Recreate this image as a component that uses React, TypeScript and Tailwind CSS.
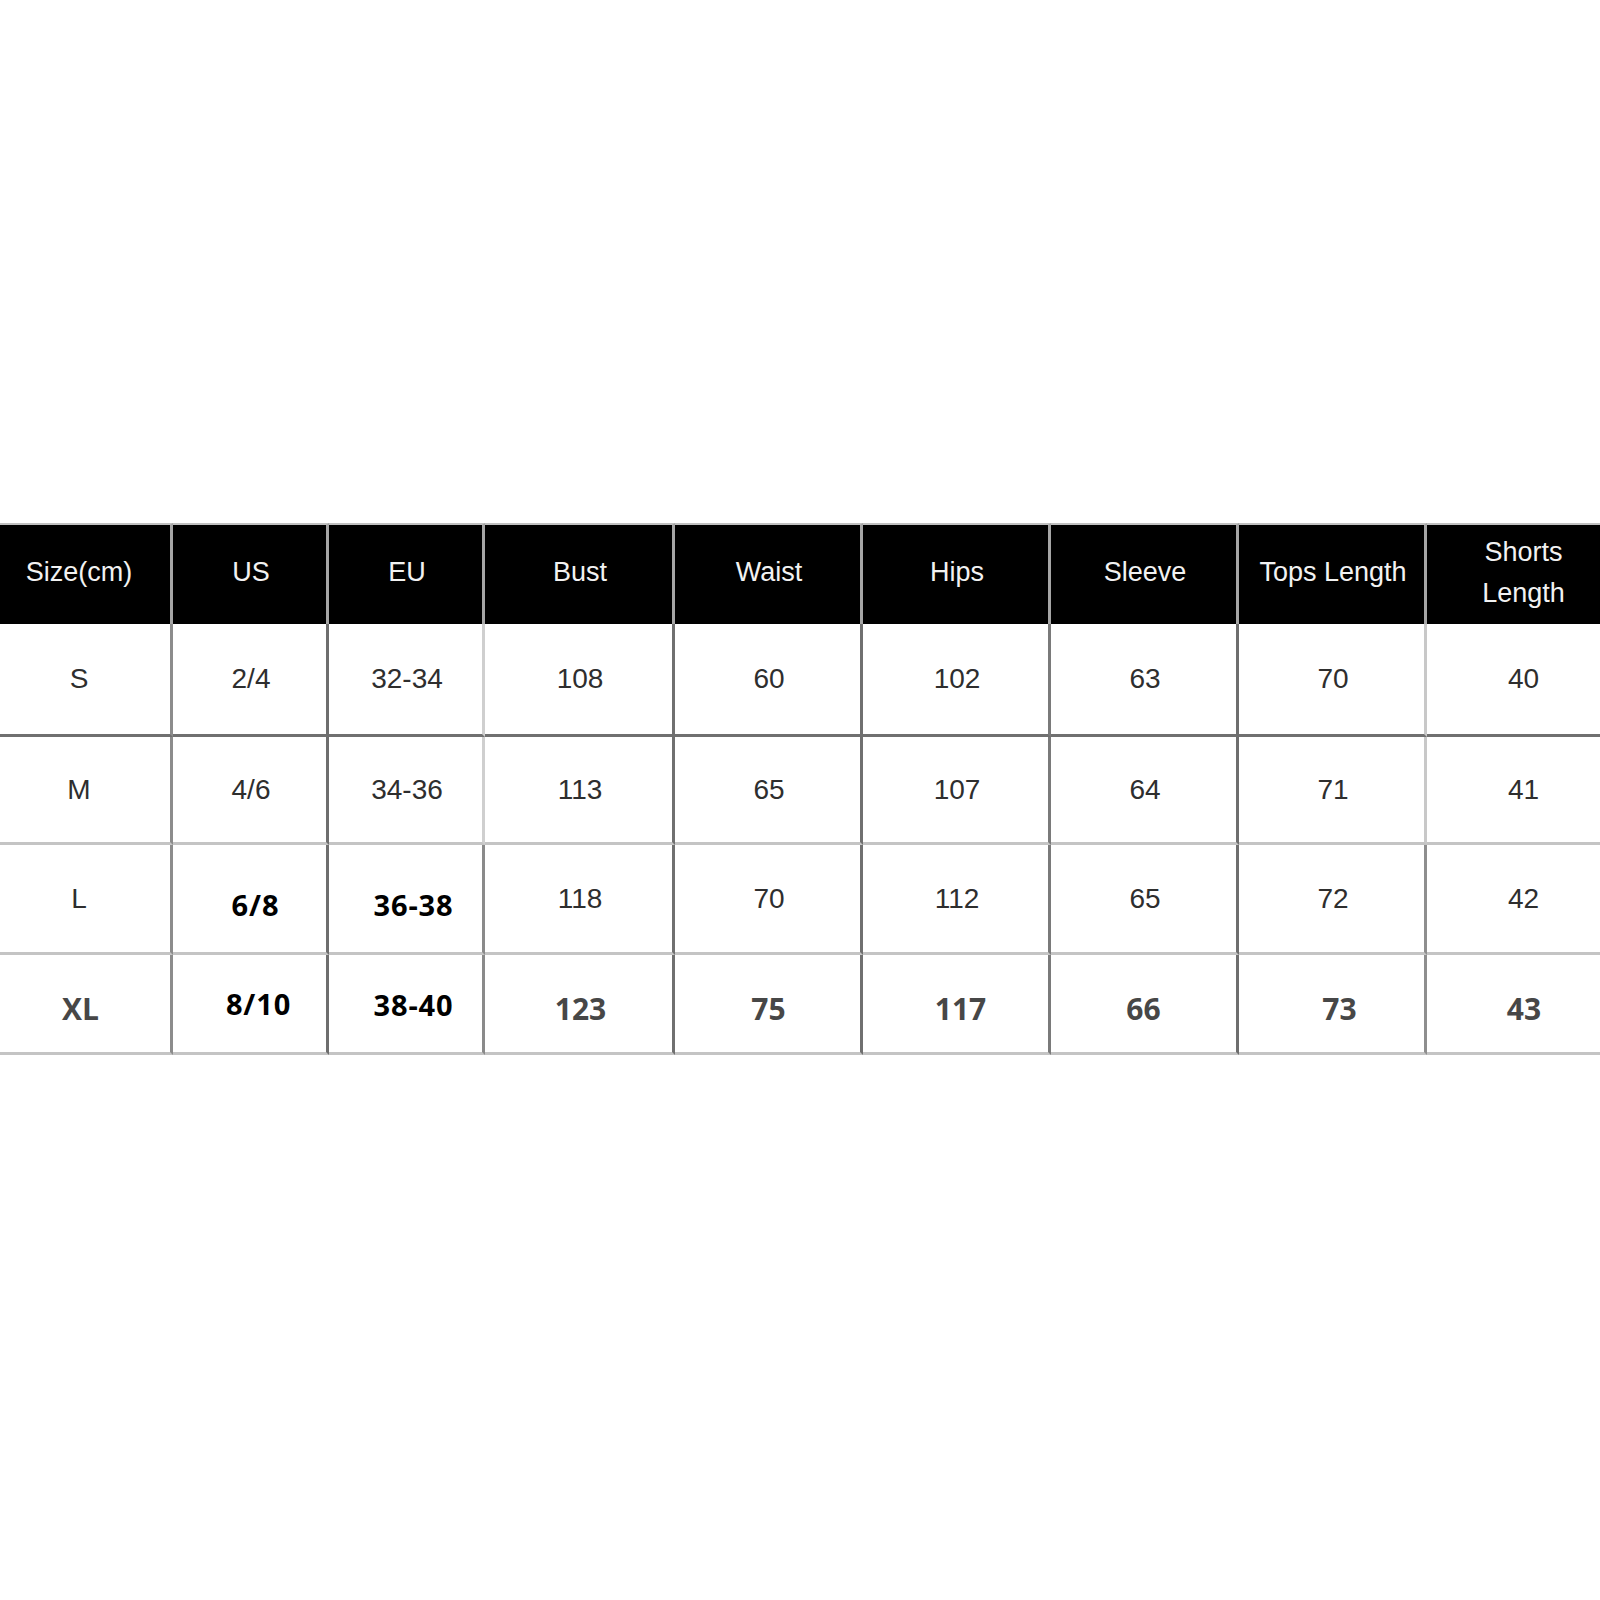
import React from 'react';

type Cell = { t: string; c?: string };

const headers = ['Size(cm)', 'US', 'EU', 'Bust', 'Waist', 'Hips', 'Sleeve', 'Tops Length', 'Shorts Length'];

// regular rows use the Arial-like face, the pasted-in values are bolder Open Sans
const reg = "font-['Liberation_Sans',Arial,sans-serif] text-[28px] text-[#2e2e2e] pl-[3px]";
const boldBlack = "font-['Open_Sans',sans-serif] font-bold text-[29px] text-black tracking-[0.03em]";
const boldGray = "font-['Open_Sans',sans-serif] font-bold text-[30px] text-[#474747]";

const rows: { h: string; line: string; cells: Cell[] }[] = [
  {
    h: 'h-[113px]',
    line: 'border-b-[#707070]',
    cells: [
      { t: 'S', c: reg },
      { t: '2/4', c: reg },
      { t: '32-34', c: reg },
      { t: '108', c: reg },
      { t: '60', c: reg },
      { t: '102', c: reg },
      { t: '63', c: reg },
      { t: '70', c: reg },
      { t: '40', c: reg },
    ],
  },
  {
    h: 'h-[108px]',
    line: 'border-b-[#c4c4c4]',
    cells: [
      { t: 'M', c: reg },
      { t: '4/6', c: reg },
      { t: '34-36', c: reg },
      { t: '113', c: reg },
      { t: '65', c: reg },
      { t: '107', c: reg },
      { t: '64', c: reg },
      { t: '71', c: reg },
      { t: '41', c: reg },
    ],
  },
  {
    h: 'h-[110px]',
    line: 'border-b-[#c4c4c4]',
    cells: [
      { t: 'L', c: reg },
      { t: '6/8', c: boldBlack + ' pl-[12px] pt-[12px]' },
      { t: '36-38', c: boldBlack + ' pl-[16px] pt-[12px]' },
      { t: '118', c: reg },
      { t: '70', c: reg },
      { t: '112', c: reg },
      { t: '65', c: reg },
      { t: '72', c: reg },
      { t: '42', c: reg },
    ],
  },
  {
    h: 'h-[100px]',
    line: 'border-b-[#c4c4c4]',
    cells: [
      { t: 'XL', c: boldGray + ' pl-[6px] pt-[10px]' },
      { t: '8/10', c: boldBlack + ' pl-[18px] pt-[0px]' },
      { t: '38-40', c: boldBlack + ' pl-[16px] pt-[2px]' },
      { t: '123', c: boldGray + ' pl-[4px] pt-[10px]' },
      { t: '75', c: boldGray + ' pl-[2px] pt-[10px]' },
      { t: '117', c: boldGray + ' pl-[10px] pt-[10px]' },
      { t: '66', c: boldGray + ' pt-[10px]' },
      { t: '73', c: boldGray + ' pl-[16px] pt-[10px]' },
      { t: '43', c: boldGray + ' pl-[4px] pt-[10px]' },
    ],
  },
];

// vertical rule colour per column (right edge); Bust's left rule and the last rule are lighter on top rows
const vTop = [
  'border-r-[#8c8c8c]',
  'border-r-[#6e6e6e]',
  'border-r-[#cfcfcf]',
  'border-r-[#707070]',
  'border-r-[#707070]',
  'border-r-[#7a7a7a]',
  'border-r-[#6e6e6e]',
  'border-r-[#c8c8c8]',
  'border-r-0',
];
const vBottom = [
  'border-r-[#8c8c8c]',
  'border-r-[#6e6e6e]',
  'border-r-[#8a8a8a]',
  'border-r-[#707070]',
  'border-r-[#707070]',
  'border-r-[#7a7a7a]',
  'border-r-[#6e6e6e]',
  'border-r-[#8e8e8e]',
  'border-r-0',
];

export default function App() {
  return (
    <div className="w-[1600px] h-[1600px] bg-white overflow-hidden pt-[523px]">
      <div className="-ml-[15px] w-[1632px] grid grid-cols-[188px_156px_156px_190px_188px_188px_188px_188px_190px]">
        {headers.map((h, i) => (
          <div
            key={h}
            className={`h-[101px] bg-black border-t-2 border-t-[#c0c0c0] flex items-center justify-center text-center text-[#f2f2f2] font-['Liberation_Sans',Arial,sans-serif] text-[27px] leading-[41px] pb-[4px] pl-[3px] ${
              i < headers.length - 1 ? 'border-r-[3px] border-r-[#a6a6a6]' : ''
            }`}
          >
            <span className={i === headers.length - 1 ? 'block w-[110px]' : ''}>{h}</span>
          </div>
        ))}
        {rows.map((r, ri) =>
          r.cells.map((cell, ci) => (
            <div
              key={`${ri}-${ci}`}
              className={`${r.h} border-b-[3px] ${r.line} ${ci < 8 ? 'border-r-[3px]' : ''} ${
                ri < 2 ? vTop[ci] : vBottom[ci]
              } flex items-center justify-center ${cell.c ?? reg}`}
            >
              {cell.t}
            </div>
          ))
        )}
      </div>
    </div>
  );
}
